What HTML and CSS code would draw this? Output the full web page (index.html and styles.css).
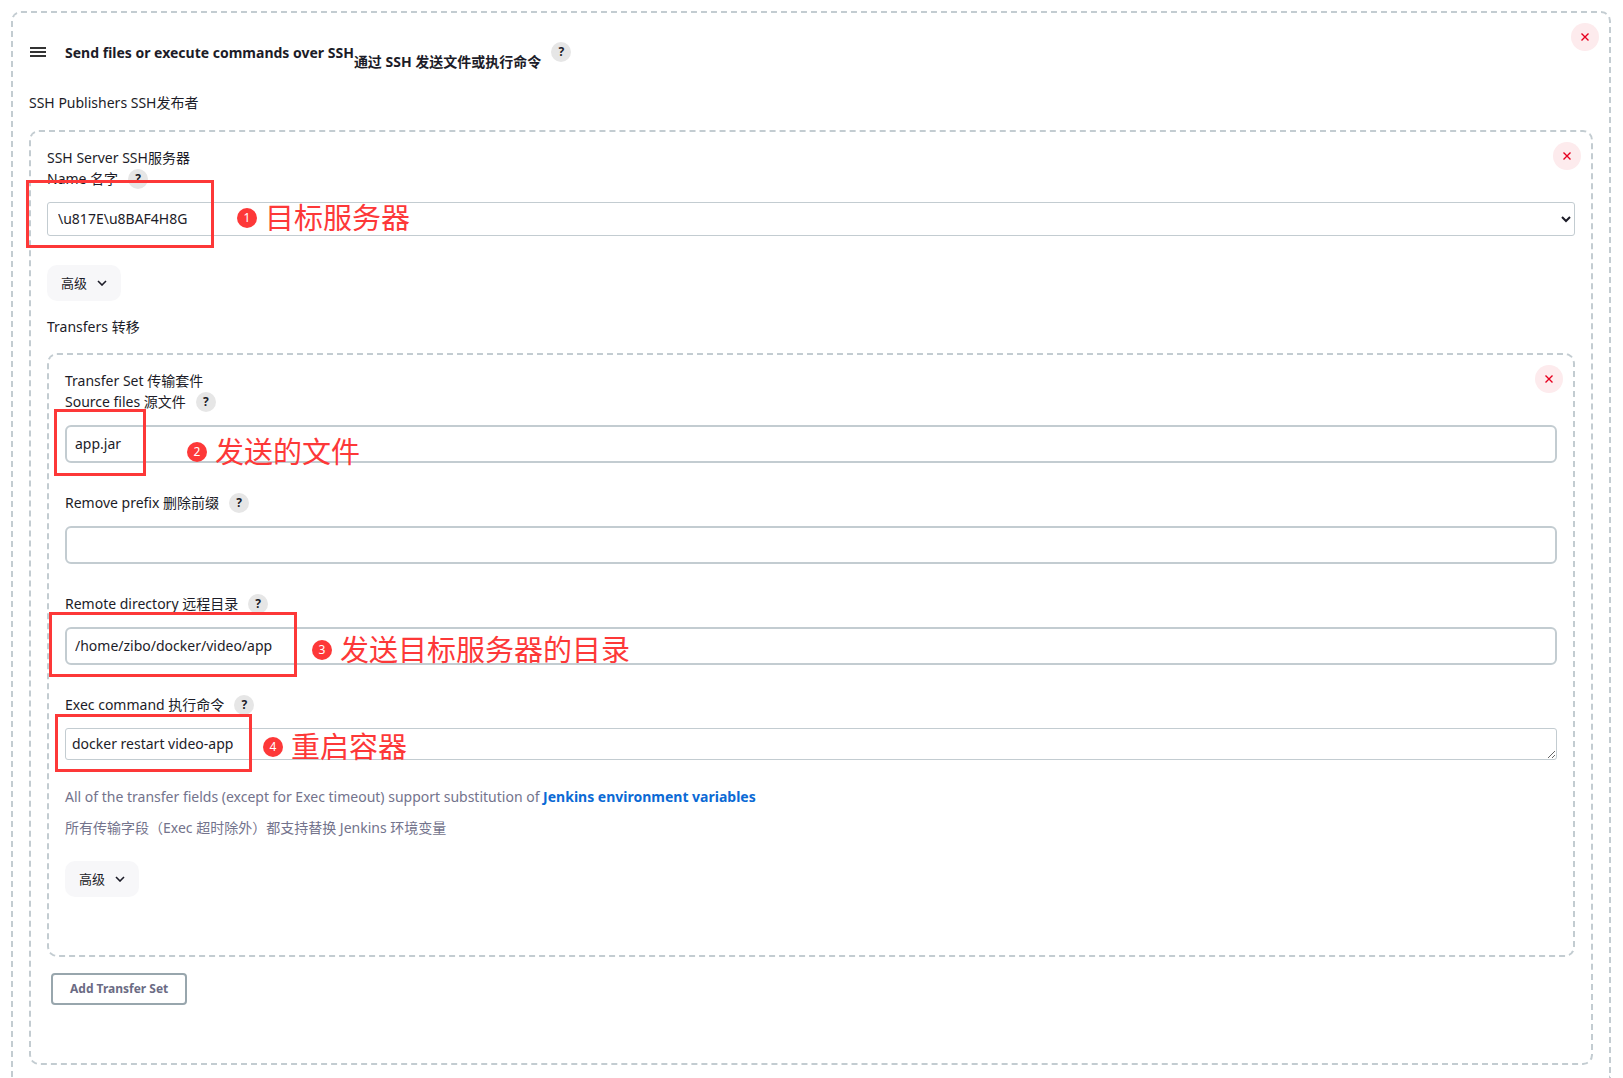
FILE: index.html
```html
<!DOCTYPE html>
<html lang="zh-CN">
  <head>
    <meta charset="UTF-8" />
    <meta name="viewport" content="width=device-width, initial-scale=1.0" />
    <title>Send files or execute commands over SSH</title>
    <link rel="stylesheet" href="styles.css">
  </head>
  <body>
    <section class="chunk outer">
      <button type="button" class="delete" aria-label="Delete">
        <svg width="10" height="10" viewBox="0 0 10 10"><path d="M1.5 1.5l7 7M8.5 1.5l-7 7" /></svg>
      </button>
      <header class="chunk-header">
        <svg class="handle" width="16" height="10" viewBox="0 0 16 10"><path d="M0 1h16M0 5h16M0 9h16" /></svg>
        <h1>Send files or execute commands over SSH<span>通过 SSH 发送文件或执行命令</span></h1>
        <button type="button" class="help">?</button>
      </header>
      <div class="row-label">SSH Publishers SSH发布者</div>

      <section class="chunk">
        <button type="button" class="delete" aria-label="Delete">
          <svg width="10" height="10" viewBox="0 0 10 10"><path d="M1.5 1.5l7 7M8.5 1.5l-7 7" /></svg>
        </button>
        <div class="chunk-title">SSH Server SSH服务器</div>
        <div class="field">
          <div class="field-label">
            <label for="server">Name 名字</label>
            <button type="button" class="help">?</button>
          </div>
          <select id="server">
            <option>\u817E\u8BAF4H8G</option>
          </select>
          <div class="mark mark-server"></div>
          <div class="note note-server"><b>1</b>目标服务器</div>
        </div>
        <button type="button" class="advanced">
          高级
          <svg width="10" height="6" viewBox="0 0 10 6"><path d="M1 1l4 4 4-4" /></svg>
        </button>
        <div class="row-label transfers">Transfers 转移</div>

        <section class="chunk">
          <button type="button" class="delete" aria-label="Delete">
            <svg width="10" height="10" viewBox="0 0 10 10"><path d="M1.5 1.5l7 7M8.5 1.5l-7 7" /></svg>
          </button>
          <div class="chunk-title">Transfer Set 传输套件</div>
          <div class="field">
            <div class="field-label">
              <label for="source">Source files 源文件</label>
              <button type="button" class="help">?</button>
            </div>
            <input type="text" id="source" value="app.jar" />
            <div class="mark mark-source"></div>
            <div class="note note-source"><b>2</b>发送的文件</div>
          </div>
          <div class="field">
            <div class="field-label">
              <label for="prefix">Remove prefix 删除前缀</label>
              <button type="button" class="help">?</button>
            </div>
            <input type="text" id="prefix" />
          </div>
          <div class="field">
            <div class="field-label">
              <label for="directory">Remote directory 远程目录</label>
              <button type="button" class="help">?</button>
            </div>
            <input type="text" id="directory" value="/home/zibo/docker/video/app" />
            <div class="mark mark-directory"></div>
            <div class="note note-directory"><b>3</b>发送目标服务器的目录</div>
          </div>
          <div class="field">
            <div class="field-label">
              <label for="command">Exec command 执行命令</label>
              <button type="button" class="help">?</button>
            </div>
            <textarea id="command" rows="1">docker restart video-app</textarea>
            <div class="mark mark-command"></div>
            <div class="note note-command"><b>4</b>重启容器</div>
          </div>
          <div class="description">
            <p>All of the transfer fields (except for Exec timeout) support substitution of <a href="#">Jenkins environment variables</a></p>
            <p>所有传输字段（Exec 超时除外）都支持替换 Jenkins 环境变量</p>
          </div>
          <button type="button" class="advanced">
            高级
            <svg width="10" height="6" viewBox="0 0 10 6"><path d="M1 1l4 4 4-4" /></svg>
          </button>
        </section>

        <button type="button" class="add">Add Transfer Set</button>
      </section>
    </section>
  </body>
</html>
```
FILE: styles.css
```css
* {
  box-sizing: border-box;
}

body {
  margin: 11px 12px 0 11px;
  background-color: #fff;
  color: #1c1c28;
  font-family: "Noto Sans", "Noto Sans CJK SC", sans-serif;
  font-size: 14px;
  line-height: 21px;
}

button,
input,
select,
textarea {
  font: inherit;
  color: inherit;
}

button {
  border: none;
  padding: 0;
  cursor: pointer;
}

svg {
  fill: none;
  stroke: currentColor;
}

.chunk {
  position: relative;
  border: 2px dashed #c3ccd1;
  border-radius: 10px;
  padding: 15px 16px 58px;
}

.outer {
  border-bottom: none;
  border-radius: 10px 10px 0 0;
  padding-bottom: 13px;
}

.chunk-header {
  display: flex;
  align-items: center;
  height: 48px;
  margin-bottom: 16px;
}

.handle {
  margin: 0 19px 0 1px;
  stroke-width: 2;
  color: #333;
}

h1 {
  margin: 0 10px 0 0;
  font-size: 14px;
  line-height: 21px;
}

h1 span {
  position: relative;
  top: 9px;
}

.help {
  width: 20px;
  height: 20px;
  border-radius: 50%;
  background-color: #e6e6e6;
  font-size: 12px;
  font-weight: bold;
  line-height: 20px;
}

.delete {
  position: absolute;
  top: 10px;
  right: 10px;
  display: flex;
  align-items: center;
  justify-content: center;
  width: 28px;
  height: 28px;
  border-radius: 50%;
  background-color: #fdebed;
  color: #e6001f;
}

.delete svg {
  stroke-width: 1.4;
}

.row-label {
  margin-bottom: 17px;
}

.transfers {
  margin: 15px 0 16px;
}

.field {
  position: relative;
  margin-bottom: 29px;
}

.field-label {
  display: flex;
  align-items: center;
  gap: 10px;
  height: 21px;
  margin-bottom: 13px;
}

select,
input,
textarea {
  display: block;
  width: 100%;
  background-color: #fff;
}

select {
  height: 34px;
  border: 1px solid #c3ccd1;
  border-radius: 3px;
  padding: 0 6px 2px;
}

input {
  height: 38px;
  border: 2px solid #c3ccd1;
  border-radius: 6px;
  padding: 0 8px 2px;
}

textarea {
  height: 32px;
  border: 1px solid #c3ccd1;
  border-radius: 3px;
  padding: 4px 6px;
  overflow: hidden;
  resize: vertical;
}

.advanced {
  display: flex;
  align-items: center;
  gap: 10px;
  height: 36px;
  border-radius: 10px;
  padding: 0 14px;
  background-color: #f7f7f9;
  font-size: 13px;
}

.advanced svg {
  stroke-width: 1.6;
}

.description {
  margin: -3px 0 23px;
  color: #73738c;
}

.description p {
  margin: 0 0 10px;
}

.description a {
  color: #0b6ad5;
  font-weight: bold;
  text-decoration: none;
}

.add {
  height: 32px;
  margin: 16px 4px 0;
  border: 2px solid #98a6ad;
  border-radius: 4px;
  padding: 0 17px 2px;
  background-color: #fff;
  color: #6b6b84;
  font-size: 12px;
  font-weight: bold;
}

/* red outlines and numbered notes lie over the form */
.mark {
  position: absolute;
  border: 3px solid #fd3838;
}

.note {
  position: absolute;
  display: flex;
  align-items: center;
  gap: 8px;
  color: #fd3838;
  font-size: 29px;
  line-height: 40px;
  white-space: nowrap;
}

.note b {
  width: 20px;
  height: 20px;
  border-radius: 50%;
  background-color: #fd3838;
  color: #fff;
  font-size: 12px;
  font-weight: normal;
  line-height: 20px;
  text-align: center;
}

.mark-server {
  top: 12px;
  left: -21px;
  width: 188px;
  height: 68px;
}

.note-server {
  top: 30px;
  left: 190px;
}

.mark-source {
  top: 18px;
  left: -11px;
  width: 92px;
  height: 67px;
}

.note-source {
  top: 41px;
  left: 122px;
}

.mark-directory {
  top: 19px;
  left: -16px;
  width: 248px;
  height: 65px;
}

.note-directory {
  top: 37px;
  left: 247px;
}

.mark-command {
  top: 20px;
  left: -10px;
  width: 197px;
  height: 58px;
}

.note-command {
  top: 33px;
  left: 198px;
}
```
